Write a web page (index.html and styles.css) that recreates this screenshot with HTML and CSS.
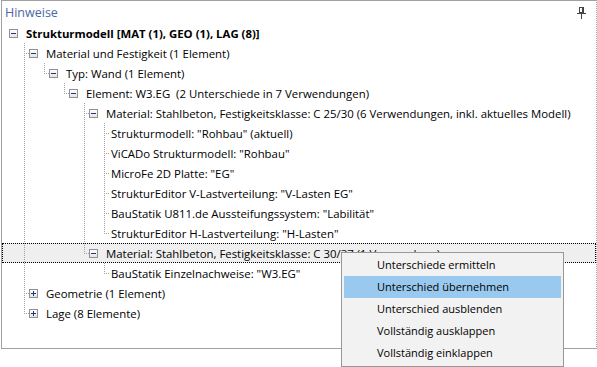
FILE: index.html
```html
<!DOCTYPE html>
<html lang="de">
<head>
  <meta charset="UTF-8">
  <title>Hinweise</title>
  <link rel="stylesheet" href="styles.css">
</head>
<body>

<div class="panel">
  <div class="panel-head">
    <span class="panel-title">Hinweise</span>
    <svg class="pin" width="9" height="12" viewBox="0 0 9 12">
      <rect x="2.5" y="0.5" width="4" height="5" fill="none" stroke="#444"/>
      <line x1="5.5" y1="1" x2="5.5" y2="5" stroke="#444"/>
      <line x1="0" y1="6.5" x2="9" y2="6.5" stroke="#444"/>
      <line x1="4.5" y1="7" x2="4.5" y2="12" stroke="#444"/>
    </svg>
  </div>

  <div class="tree">
    <div class="row">
      <span class="j root"></span><span class="box minus"></span>
      <span class="label bold">Strukturmodell [MAT (1), GEO (1), LAG (8)]</span>
    </div>

    <div class="row">
      <span class="g"></span>
      <span class="j tee"></span><span class="box minus"></span>
      <span class="label">Material und Festigkeit (1 Element)</span>
    </div>

    <div class="row">
      <span class="g"></span><span class="g on"></span>
      <span class="j ell"></span><span class="box minus"></span>
      <span class="label">Typ: Wand (1 Element)</span>
    </div>

    <div class="row">
      <span class="g"></span><span class="g on"></span><span class="g"></span>
      <span class="j ell"></span><span class="box minus"></span>
      <span class="label">Element: W3.EG  (2 Unterschiede in 7 Verwendungen)</span>
    </div>

    <div class="row">
      <span class="g"></span><span class="g on"></span><span class="g"></span><span class="g"></span>
      <span class="j tee"></span><span class="box minus"></span>
      <span class="label">Material: Stahlbeton, Festigkeitsklasse: C 25/30 (6 Verwendungen, inkl. aktuelles Modell)</span>
    </div>

    <div class="row">
      <span class="g"></span><span class="g on"></span><span class="g"></span><span class="g"></span><span class="g on"></span>
      <span class="j tee leaf"></span>
      <span class="label">Strukturmodell: "Rohbau" (aktuell)</span>
    </div>

    <div class="row">
      <span class="g"></span><span class="g on"></span><span class="g"></span><span class="g"></span><span class="g on"></span>
      <span class="j tee leaf"></span>
      <span class="label">ViCADo Strukturmodell: "Rohbau"</span>
    </div>

    <div class="row">
      <span class="g"></span><span class="g on"></span><span class="g"></span><span class="g"></span><span class="g on"></span>
      <span class="j tee leaf"></span>
      <span class="label">MicroFe 2D Platte: "EG"</span>
    </div>

    <div class="row">
      <span class="g"></span><span class="g on"></span><span class="g"></span><span class="g"></span><span class="g on"></span>
      <span class="j tee leaf"></span>
      <span class="label">StrukturEditor V-Lastverteilung: "V-Lasten EG"</span>
    </div>

    <div class="row">
      <span class="g"></span><span class="g on"></span><span class="g"></span><span class="g"></span><span class="g on"></span>
      <span class="j tee leaf"></span>
      <span class="label">BauStatik U811.de Aussteifungssystem: "Labilität"</span>
    </div>

    <div class="row">
      <span class="g"></span><span class="g on"></span><span class="g"></span><span class="g"></span><span class="g on"></span>
      <span class="j ell leaf"></span>
      <span class="label">StrukturEditor H-Lastverteilung: "H-Lasten"</span>
    </div>

    <div class="row selected">
      <span class="g"></span><span class="g on"></span><span class="g"></span><span class="g"></span>
      <span class="j ell"></span><span class="box minus"></span>
      <span class="label">Material: Stahlbeton, Festigkeitsklasse: C 30/37 (1 Verwendung)</span>
    </div>

    <div class="row">
      <span class="g"></span><span class="g on"></span><span class="g"></span><span class="g"></span><span class="g"></span>
      <span class="j ell leaf"></span>
      <span class="label">BauStatik Einzelnachweise: "W3.EG"</span>
    </div>

    <div class="row">
      <span class="g"></span>
      <span class="j tee"></span><span class="box plus"></span>
      <span class="label">Geometrie (1 Element)</span>
    </div>

    <div class="row">
      <span class="g"></span>
      <span class="j ell"></span><span class="box plus"></span>
      <span class="label">Lage (8 Elemente)</span>
    </div>
  </div>
</div>

<!-- context menu for the selected entry -->
<ul class="context-menu">
  <li>Unterschiede ermitteln</li>
  <li class="active">Unterschied übernehmen</li>
  <li>Unterschied ausblenden</li>
  <li>Vollständig ausklappen</li>
  <li>Vollständig einklappen</li>
</ul>

</body>
</html>
```

FILE: styles.css
```css
html, body {
  margin: 0;
  background: #fff;
  font-family: 'Open Sans', 'Noto Sans', sans-serif;
  font-size: 11.4px;
  color: #000;
}

.panel {
  margin-left: 1px;
  width: 594px;
  height: 347px;
  border: 1px solid #a0a0a0;
  border-right: 1px dotted #a0a0a0;
  background: #fff;
}

.panel-head {
  display: flex;
  align-items: center;
  justify-content: space-between;
  height: 22px;
  padding: 0 10px 0 3px;
}

.panel-title {
  color: #4a68a4;
  font-size: 12.5px;
}

.pin {
  margin-top: 2px;
}

.row {
  display: flex;
  align-items: center;
  height: 20px;
}

.row.selected {
  background: #efefef;
  outline: 1px dotted #000;
  outline-offset: -1px;
}

.g {
  flex: none;
  width: 20px;
  height: 20px;
}

.g.on {
  background: repeating-linear-gradient(#a0a0a0 0 1px, transparent 1px 2px) 2px 0 / 1px 100% no-repeat;
}

.j {
  flex: none;
  width: 5px;
  height: 20px;
  margin-left: 2px;
}

.j.leaf {
  width: 6px;
  margin-right: 1px;
}

.j.root {
  width: 7px;
  margin-left: 0;
}

.j.tee {
  background:
    repeating-linear-gradient(#a0a0a0 0 1px, transparent 1px 2px) 0 0 / 1px 100% no-repeat,
    repeating-linear-gradient(to right, #a0a0a0 0 1px, transparent 1px 2px) 0 10px / 100% 1px no-repeat;
}

.j.ell {
  background:
    repeating-linear-gradient(#a0a0a0 0 1px, transparent 1px 2px) 0 0 / 1px 11px no-repeat,
    repeating-linear-gradient(to right, #a0a0a0 0 1px, transparent 1px 2px) 0 10px / 100% 1px no-repeat;
}

.box {
  flex: none;
  position: relative;
  width: 7px;
  height: 7px;
  border: 1px solid #919191;
  background: linear-gradient(#fff, #e4e4e4);
  margin-right: 8px;
}

.box::before,
.box::after {
  content: "";
  position: absolute;
  background: #23357a;
}

.box::before {
  left: 1px;
  top: 3px;
  width: 5px;
  height: 1px;
}

.box.plus::after {
  left: 3px;
  top: 1px;
  width: 1px;
  height: 5px;
}

.label {
  white-space: pre;
}

.label.bold {
  font-weight: bold;
}

.context-menu {
  position: absolute;
  left: 341px;
  top: 252px;
  width: 219px;
  height: 112px;
  margin: 0;
  padding: 1px 1px 0;
  list-style: none;
  background: #f2f2f2;
  border: 1px solid #979797;
  font-size: 11px;
}

.context-menu li {
  height: 22px;
  line-height: 22px;
  margin: 0 1px;
  padding-left: 33px;
}

.context-menu li.active {
  background: #99c9ef;
}
```
